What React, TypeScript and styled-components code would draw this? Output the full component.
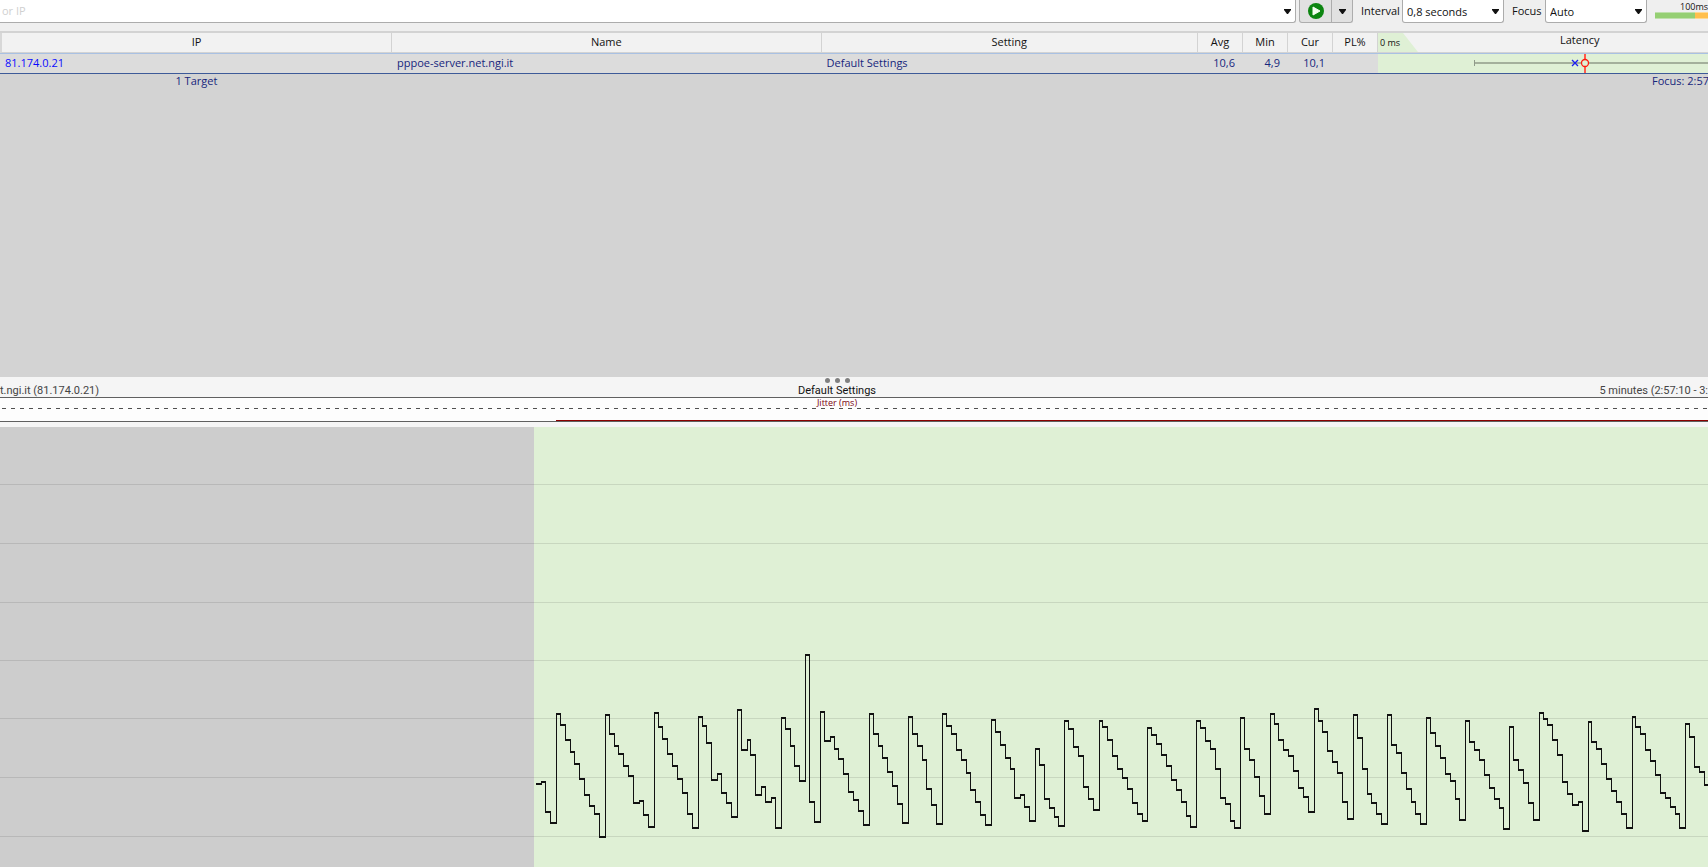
import React from 'react';
import styled, { createGlobalStyle } from 'styled-components';

const GlobalStyle = createGlobalStyle`
  *, *::before, *::after { box-sizing: border-box; }
  html, body { margin: 0; padding: 0; }
  body {
    overflow: hidden;
    background: #f5f5f5;
    color: #111;
    font-family: "Open Sans", "Noto Sans", sans-serif;
    font-size: 11px;
    line-height: 16px;
  }
`;

const Page = styled.main`
  display: flex;
  flex-direction: column;
  min-height: 100vh;
  overflow: hidden;
`;

/* ---------- Toolbar ---------- */

const Toolbar = styled.form`
  display: flex;
  align-items: flex-start;
  height: 31px;
  background: #efefef;
  overflow: hidden;
`;

const TargetBox = styled.div`
  position: relative;
  flex: 1 1 0;
  min-width: 0;
`;

const TargetInput = styled.input`
  display: block;
  width: 100%;
  height: 23px;
  padding: 0 24px 1px 2px;
  border: 1px solid #acacac;
  border-width: 0 1px 1px 0;
  border-radius: 0 0 3px 0;
  background: #fff;
  color: #111;
  font: inherit;
  outline: none;
  &::placeholder { color: #d0d0d0; opacity: 1; }
`;

const ArrowSlot = styled.span`
  position: absolute;
  top: 9px;
  right: 5px;
  display: flex;
  pointer-events: none;
`;

const SplitButton = styled.div`
  display: flex;
  flex: none;
  height: 23px;
  margin-left: 3px;
  border: 1px solid #adadad;
  border-top: 0;
  border-radius: 0 0 3px 3px;
  background: #e1e1e1;
`;

const SplitPart = styled.button<{ $width: number; $divided?: boolean }>`
  display: flex;
  align-items: center;
  justify-content: center;
  width: ${p => p.$width}px;
  padding: 0;
  border: 0;
  border-left: ${p => (p.$divided ? '1px solid #adadad' : '0')};
  background: transparent;
`;

const FieldLabel = styled.label`
  flex: none;
  width: 41px;
  height: 22px;
  margin-left: 8px;
  line-height: 22px;
  white-space: nowrap;
`;

const FocusLabel = styled(FieldLabel)`
  width: 33px;
`;

const SelectBox = styled.div`
  position: relative;
  flex: none;
  width: 102px;
`;

const Select = styled.select`
  display: block;
  width: 100%;
  height: 23px;
  padding: 2px 20px 0 4px;
  appearance: none;
  border: 1px solid #acacac;
  border-top: 0;
  border-radius: 0 0 3px 3px;
  background: #fff;
  color: #111;
  font: inherit;
  outline: none;
`;

const Legend = styled.div`
  flex: none;
  width: 61px;
  padding-left: 8px;
`;

const LegendText = styled.div`
  height: 12px;
  padding-left: 25px;
  font-size: 9px;
  line-height: 13px;
`;

const LegendBar = styled.div`
  display: flex;
  height: 7px;
`;

const LegendPart = styled.span<{ $color: string; $edge: string; $grow?: boolean }>`
  flex: ${p => (p.$grow ? '1' : '0 0 40px')};
  border-top: 1px solid ${p => p.$edge};
  border-bottom: 1px solid ${p => p.$edge};
  background: ${p => p.$color};
`;

/* ---------- Target table ---------- */

const TargetPane = styled.section`
  flex: none;
  height: 346px;
  border-top: 2px solid #d3d3d3;
  background: #d3d3d3;
  overflow: hidden;
`;

const Table = styled.table`
  width: 100%;
  table-layout: fixed;
  border-collapse: separate;
  border-spacing: 0;
`;

const Col = styled.col<{ $width?: string }>`
  width: ${p => p.$width || 'auto'};
`;

const Th = styled.th<{ $first?: boolean }>`
  height: 20px;
  padding: 0 0 2px;
  border-right: 1px solid #d3d3d3;
  border-left: ${p => (p.$first ? '2px solid #d8d8d8' : '0')};
  border-bottom: 1px solid #d3d3d3;
  background: #f2f2f2;
  font-weight: 400;
  line-height: 17px;
  text-align: center;
`;

const LatencyTh = styled(Th)`
  padding: 0;
  border-right: 0;
  overflow: hidden;
`;

const LatencyHead = styled.div`
  display: flex;
  height: 19px;
  line-height: 14px;
`;

const ZeroMark = styled.span`
  flex: none;
  width: 40px;
  height: 19px;
  padding-left: 2px;
  background: #dff0d5;
  clip-path: polygon(0 0, 25px 0, 40px 100%, 0 100%);
  font-size: 9px;
  line-height: 20px;
  text-align: left;
`;

const LatencyTitle = styled.span`
  padding-left: 142px;
`;

const Td = styled.td<{ $num?: boolean }>`
  height: 21px;
  padding: ${p => (p.$num ? '0 8px 2px 0' : '0 0 2px 5px')};
  border-top: 1px solid #a9c1e3;
  border-bottom: 1px solid #3d5a98;
  background: #dcdcdc;
  color: #16267c;
  line-height: 17px;
  text-align: ${p => (p.$num ? 'right' : 'left')};
`;

const HostLink = styled.a`
  color: #0a0aff;
  text-decoration: none;
`;

const LatencyTd = styled(Td)`
  padding: 0;
  background: #dff0d5;
  line-height: 0;
`;

const Summary = styled.div`
  display: flex;
  justify-content: space-between;
  height: 14px;
  color: #16267c;
  line-height: 13px;
  white-space: nowrap;
`;

const SummaryCount = styled.span`
  width: 23%;
  text-align: center;
`;

const SummaryFocus = styled.span`
  flex: none;
  width: 56px;
`;

/* ---------- Timeline ---------- */

const Timeline = styled.section`
  display: flex;
  flex: 1;
  flex-direction: column;
  background: #f5f5f5;
`;

const Grip = styled.div`
  display: flex;
  justify-content: center;
  gap: 5px;
  height: 6px;
  padding: 1px 34px 0 0;
`;

const GripDot = styled.i`
  width: 5px;
  height: 5px;
  border-radius: 50%;
  background: #808080;
`;

const TitleRow = styled.header`
  display: grid;
  grid-template-columns: 1fr auto 1fr;
  height: 14px;
  padding-right: 34px;
  font-family: Roboto, "Open Sans", sans-serif;
  line-height: 15px;
  white-space: nowrap;
`;

const TitleHost = styled.span`
  color: #444;
`;

const TitleRange = styled.span`
  justify-self: end;
  margin-right: -34px;
  color: #444;
`;

const Heading = styled.h2`
  margin: 0;
  font: inherit;
`;

const JitterPane = styled.div`
  flex: none;
  height: 25px;
  border-top: 1px solid #606060;
  border-bottom: 1px solid #606060;
  background: #fdfdfd;
`;

const JitterTitle = styled.div`
  height: 10px;
  padding-right: 34px;
  color: #7b0010;
  font-size: 9px;
  line-height: 10px;
  text-align: center;
`;

const Line = styled.svg`
  display: block;
  width: 100%;
`;

const Chart = styled.svg`
  display: block;
  flex: 1;
  width: 100%;
  min-height: 440px;
  margin-top: 5px;
`;

const Arrow = () => (
  <svg width="7" height="5" viewBox="0 0 7 5" aria-hidden="true">
    <path d="M0 0H7V1L4 5H3L0 1Z" fill="#111" />
  </svg>
);

const PlayIcon = () => (
  <svg width="16" height="16" viewBox="0 0 16 16" aria-hidden="true">
    <circle cx="8" cy="8" r="8" fill="#0c8510" />
    <path d="M5 4L12 8L5 12Z" fill="#f4fff0" stroke="#f4fff0" strokeLinejoin="round" />
  </svg>
);

/* Step samples of the round-trip trace: [x of the step's left edge, y of its level]. */
const steps: [number, number][] = [
  [16,144],[21,142],[25,172],[30,183],[36,74],[40,85],[45,100],[50,112],[54,124],[59,139],[64,155],[69,166],[74,174],[79,197],
  [85,75],[89,94],[94,106],[98,114],[103,126],[108,136],[113,163],[119,161],[123,175],[128,187],
  [134,73],[138,87],[142,99],[147,114],[152,126],[157,139],[162,153],[167,174],[172,188],
  [178,77],[182,86],[186,103],[191,140],[197,134],[201,153],[206,163],[211,177],
  [217,70],[221,110],[227,100],[230,115],[235,155],[241,147],[245,162],[251,158],[255,188],
  [261,78],[265,89],[270,106],[274,126],[279,141],[285,15],[289,162],[294,182],
  [300,72],[304,101],[310,97],[314,109],[318,119],[323,134],[328,152],[333,160],[338,171],[343,185],
  [349,74],[353,94],[358,106],[362,118],[367,132],[372,146],[377,164],[382,183],
  [388,77],[392,94],[397,106],[402,120],[406,149],[411,165],[416,184],
  [422,74],[426,86],[431,94],[436,110],[441,120],[446,133],[450,150],[455,162],[460,175],[465,185],
  [471,80],[475,92],[480,105],[485,118],[490,129],[494,158],[500,155],[504,167],[509,181],
  [515,109],[519,125],[524,159],[529,168],[534,177],[538,186],
  [544,81],[548,89],[553,107],[558,116],[563,147],[568,159],[573,170],
  [579,81],[582,87],[587,100],[592,116],[597,129],[602,138],[607,149],[612,163],[617,174],[622,181],
  [627,88],[631,95],[636,104],[641,115],[646,126],[651,140],[656,150],[661,162],[666,176],[670,187],
  [676,81],[680,88],[685,101],[690,109],[695,129],[700,158],[705,164],[710,181],[714,188],
  [720,78],[724,109],[729,120],[734,137],[739,156],[744,174],
  [750,74],[754,84],[758,100],[763,110],[768,116],[773,131],[778,148],[783,157],[788,172],
  [794,69],[798,81],[802,92],[807,111],[812,122],[817,133],[822,162],[827,179],
  [833,75],[837,98],[842,129],[847,154],[851,163],[856,174],[861,184],
  [867,75],[871,105],[876,113],[881,133],[886,149],[891,162],[895,174],[900,184],
  [906,78],[910,93],[915,106],[920,118],[925,134],[930,141],[935,159],[939,180],
  [945,81],[949,102],[954,110],[959,120],[964,135],[969,148],[974,159],[979,168],[983,189],
  [989,87],[993,120],[998,130],[1003,143],[1008,163],[1013,180],
  [1019,73],[1023,79],[1027,85],[1032,100],[1037,115],[1042,142],[1047,154],[1052,165],[1058,162],[1062,191],
  [1068,82],[1071,102],[1076,109],[1081,124],[1086,139],[1091,151],[1096,162],[1101,174],[1106,188],
  [1112,77],[1115,87],[1120,94],[1125,110],[1130,121],[1135,135],[1140,153],[1145,158],[1150,167],[1155,174],[1159,188],
  [1165,84],[1169,97],[1174,127],[1179,132],[1184,145],
];

const levels = steps
  .map(([x, y], i) => {
    const end = (i + 1 < steps.length ? steps[i + 1][0] : x + 5) + 1;
    return `M${x} ${y - 1}H${end}V${y + 1}H${x}Z`;
  })
  .join('');

const risers = steps
  .slice(1)
  .map(([x, y], i) => {
    const prev = steps[i][1];
    return `M${x} ${Math.min(prev, y) - 1}h1V${Math.max(prev, y) + 1}h-1Z`;
  })
  .join('');

const gridLines = [57, 116, 175, 233, 291, 350, 409];

export default function App() {
  return (
    <>
      <GlobalStyle />
      <Page>
        <Toolbar onSubmit={e => e.preventDefault()}>
          <TargetBox>
            <TargetInput aria-label="Target name or IP" placeholder="or IP" />
            <ArrowSlot><Arrow /></ArrowSlot>
          </TargetBox>
          <SplitButton>
            <SplitPart type="submit" $width={31} aria-label="Start"><PlayIcon /></SplitPart>
            <SplitPart type="button" $width={21} $divided aria-label="Start options"><Arrow /></SplitPart>
          </SplitButton>
          <FieldLabel htmlFor="interval">Interval</FieldLabel>
          <SelectBox>
            <Select id="interval" defaultValue="0.8"><option value="0.8">0,8 seconds</option></Select>
            <ArrowSlot><Arrow /></ArrowSlot>
          </SelectBox>
          <FocusLabel htmlFor="focus">Focus</FocusLabel>
          <SelectBox>
            <Select id="focus" defaultValue="auto"><option value="auto">Auto</option></Select>
            <ArrowSlot><Arrow /></ArrowSlot>
          </SelectBox>
          <Legend>
            <LegendText>100ms</LegendText>
            <LegendBar>
              <LegendPart $color="#95cf73" $edge="#bfe0ac" />
              <LegendPart $color="#ffbf4d" $edge="#ffd994" $grow />
            </LegendBar>
          </Legend>
        </Toolbar>

        <TargetPane>
          <Table>
            <colgroup>
              <Col $width="22.95%" />
              <Col $width="25.15%" />
              <Col />
              <Col $width="45px" />
              <Col $width="45px" />
              <Col $width="45px" />
              <Col $width="45px" />
              <Col $width="330px" />
            </colgroup>
            <thead>
              <tr>
                <Th $first>IP</Th>
                <Th>Name</Th>
                <Th>Setting</Th>
                <Th>Avg</Th>
                <Th>Min</Th>
                <Th>Cur</Th>
                <Th>PL%</Th>
                <LatencyTh>
                  <LatencyHead>
                    <ZeroMark>0 ms</ZeroMark>
                    <LatencyTitle>Latency</LatencyTitle>
                  </LatencyHead>
                </LatencyTh>
              </tr>
            </thead>
            <tbody>
              <tr>
                <Td><HostLink href="#target">81.174.0.21</HostLink></Td>
                <Td>pppoe-server.net.ngi.it</Td>
                <Td>Default Settings</Td>
                <Td $num>10,6</Td>
                <Td $num>4,9</Td>
                <Td $num>10,1</Td>
                <Td />
                <LatencyTd>
                  <Line height="19" aria-hidden="true">
                    <path d="M97 9H340" stroke="#a4b09c" strokeWidth="2" />
                    <path d="M96.5 6V12" stroke="#8f9a89" />
                    <path d="M207 0V19" stroke="#ff5a4c" strokeWidth="2" />
                    <circle cx="207" cy="9" r="3.5" fill="#dff0d5" stroke="#ff1a10" strokeWidth="1.3" />
                    <path d="M194 6L200 12M200 6L194 12" stroke="#1c1cf0" strokeWidth="1.3" />
                  </Line>
                </LatencyTd>
              </tr>
            </tbody>
          </Table>
          <Summary>
            <SummaryCount>1 Target</SummaryCount>
            <SummaryFocus>Focus: 2:57</SummaryFocus>
          </Summary>
        </TargetPane>

        <Timeline>
          <Grip><GripDot /><GripDot /><GripDot /></Grip>
          <TitleRow>
            <TitleHost>t.ngi.it (81.174.0.21)</TitleHost>
            <Heading>Default Settings</Heading>
            <TitleRange>5 minutes (2:57:10 - 3:</TitleRange>
          </TitleRow>
          <JitterPane>
            <JitterTitle>Jitter (ms)</JitterTitle>
            <Line height="13" shapeRendering="crispEdges" aria-hidden="true">
              <line x1="2" y1="0.5" x2="100%" y2="0.5" stroke="#505050" strokeDasharray="4 5" />
              <line x1="556" y1="12.5" x2="100%" y2="12.5" stroke="#8b0000" />
            </Line>
          </JitterPane>
          <Chart shapeRendering="crispEdges" role="img" aria-label="Latency over time">
            <rect width="100%" height="100%" fill="#dff0d5" />
            <rect width="534" height="100%" fill="#cdcdcd" />
            {gridLines.map(y => (
              <rect key={y} y={y} width="100%" height="1" fill="#000" fillOpacity="0.1" />
            ))}
            <g transform="translate(520 213)" fill="#111">
              <path d={levels} />
              <path d={risers} />
            </g>
          </Chart>
        </Timeline>
      </Page>
    </>
  );
}
